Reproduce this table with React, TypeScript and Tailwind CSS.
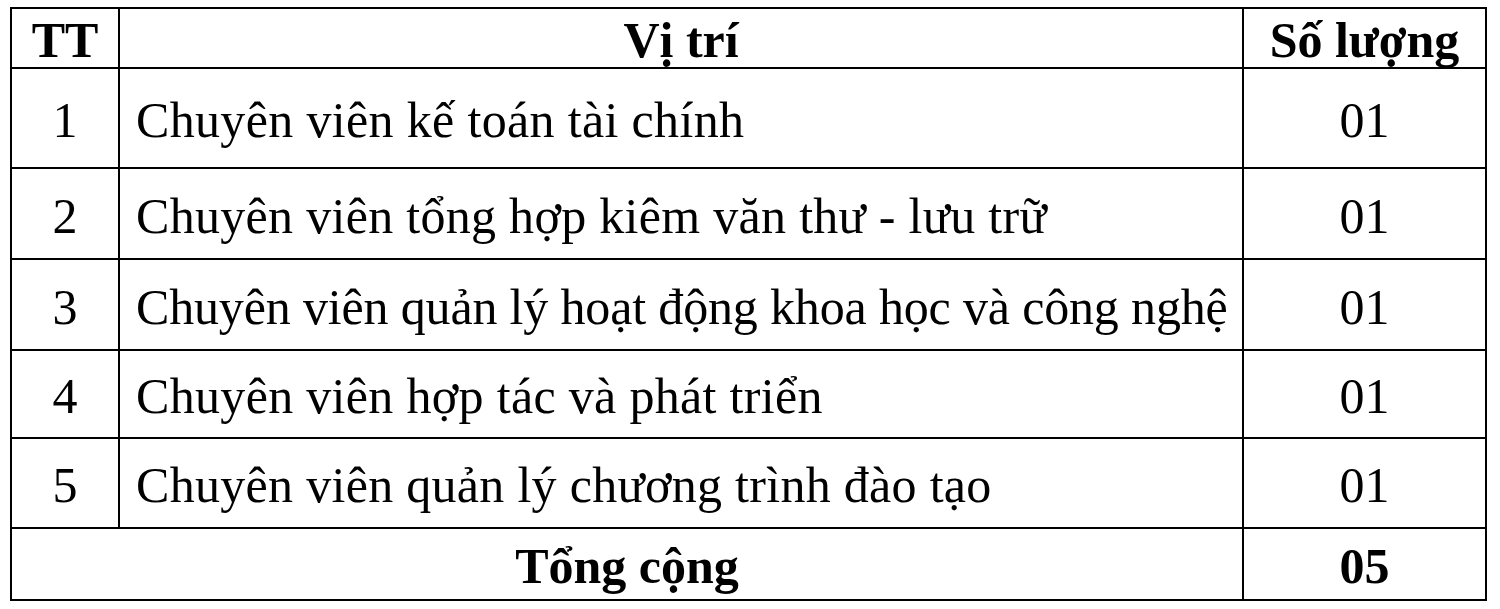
import React from "react";

const rows = [
  { tt: "1", name: "Chuyên viên kế toán tài chính", sl: "01", h: "h-[100px]", t: "tracking-[0.34px]" },
  { tt: "2", name: "Chuyên viên tổng hợp kiêm văn thư - lưu trữ", sl: "01", h: "h-[91px]", t: "tracking-[0.3px]" },
  { tt: "3", name: "Chuyên viên quản lý hoạt động khoa học và công nghệ", sl: "01", h: "h-[91px]", t: "tracking-[-0.16px]" },
  { tt: "4", name: "Chuyên viên hợp tác và phát triển", sl: "01", h: "h-[88px]", t: "tracking-[0.32px]" },
  { tt: "5", name: "Chuyên viên quản lý chương trình đào tạo", sl: "01", h: "h-[90px]", t: "tracking-[0.3px]" },
];

export default function App() {
  return (
    <div className="w-[1500px] h-[609px] bg-white overflow-hidden pt-[7px] pl-[10px] text-black [font-family:'Liberation_Serif','Times_New_Roman',serif] text-[50px] leading-none">
      <div className="grid grid-cols-[108px_1124px_243px] border-t-2 border-l-2 border-black w-[1477px]">
        <div className="h-[60px] pt-[3px] border-r-2 border-b-2 border-black flex items-center justify-center font-bold">TT</div>
        <div className="h-[60px] pt-[3px] border-r-2 border-b-2 border-black flex items-center justify-center font-bold">Vị trí</div>
        <div className="h-[60px] pt-[3px] border-r-2 border-b-2 border-black flex items-center justify-center font-bold">Số lượng</div>
        {rows.map((r) => (
          <React.Fragment key={r.tt}>
            <div className={`${r.h} pt-[4px] border-r-2 border-b-2 border-black flex items-center justify-center`}>{r.tt}</div>
            <div className={`${r.h} pt-[4px] border-r-2 border-b-2 border-black flex items-center pl-[16px] whitespace-nowrap ${r.t}`}>{r.name}</div>
            <div className={`${r.h} pt-[4px] border-r-2 border-b-2 border-black flex items-center justify-center`}>{r.sl}</div>
          </React.Fragment>
        ))}
        <div className="col-span-2 h-[72px] pt-[4px] border-r-2 border-b-2 border-black flex items-center justify-center font-bold">Tổng cộng</div>
        <div className="h-[72px] pt-[4px] border-r-2 border-b-2 border-black flex items-center justify-center font-bold">05</div>
      </div>
    </div>
  );
}
